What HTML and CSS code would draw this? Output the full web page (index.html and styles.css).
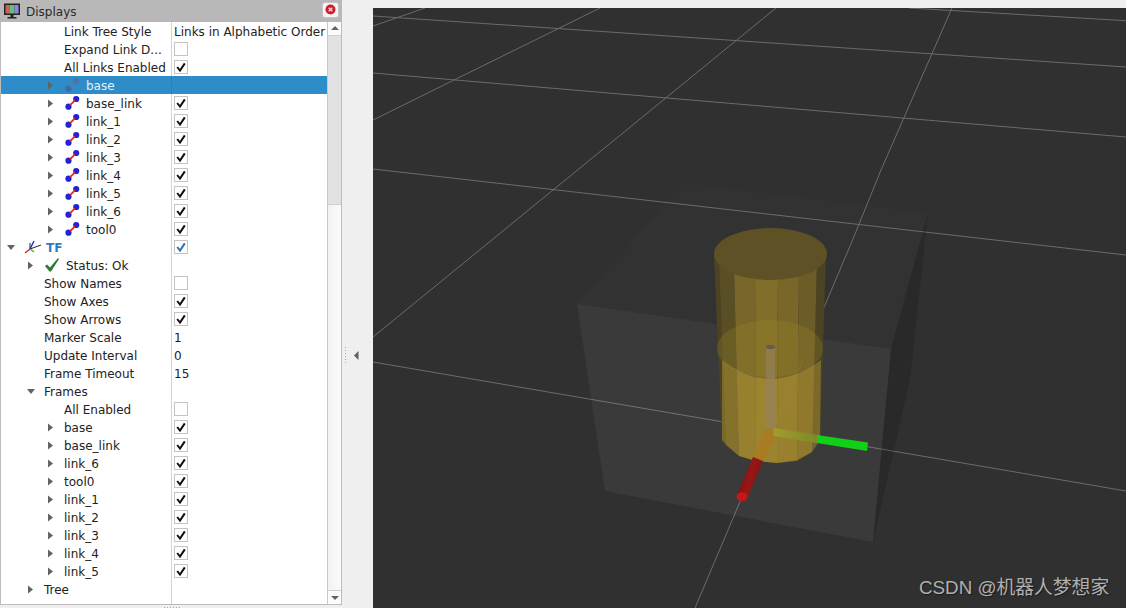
FILE: index.html
```html
<!DOCTYPE html>
<html lang="en">
<head>
<meta charset="utf-8">
<title>Displays</title>
<link rel="stylesheet" href="styles.css">
</head>
<body>
<svg class="defs" width="0" height="0" aria-hidden="true">
  <symbol id="right" viewBox="0 0 20 18"><path d="M4 5.500 L9 9.500 L4 13.500 Z" fill="#636363"/></symbol>
  <symbol id="down" viewBox="0 0 20 18"><path d="M3 7 L11 7 L7 12 Z" fill="#636363"/></symbol>
  <symbol id="link" viewBox="0 0 22 18"><circle cx="4.500" cy="12.700" r="3.100" fill="#2323d6"/><circle cx="12.200" cy="5" r="3.100" fill="#2323d6"/><path d="M6 11.200 L11 6.300" stroke="#ea2626" stroke-width="1.800"/></symbol>
  <symbol id="linkdim" viewBox="0 0 22 18"><circle cx="4.500" cy="12.700" r="3.100" fill="#3e69a8"/><circle cx="12.200" cy="5" r="3.100" fill="#4a73ab"/><path d="M6 11.200 L11 6.300" stroke="#5d7b9c" stroke-width="1.800"/></symbol>
  <symbol id="tick" viewBox="0 0 14 14"><path d="M3.200 7 L6 10.500 L10.800 3.400" fill="none" stroke="#111" stroke-width="2"/></symbol>
  <symbol id="tickblue" viewBox="0 0 14 14"><path d="M3.200 7 L6 10.500 L10.800 3.400" fill="none" stroke="#2a72b8" stroke-width="2"/></symbol>
</svg>
<div class="app">
  <section class="panel">
    <header class="titlebar">
      <svg class="monitor" width="18" height="18" viewBox="0 0 18 18">
        <rect x="1" y="1.500" width="16" height="11.500" fill="#222"/>
        <rect x="2.500" y="3" width="4.500" height="8.500" fill="#d0605c"/>
        <rect x="7" y="3" width="4.500" height="8.500" fill="#64c078"/>
        <rect x="11.500" y="3" width="4" height="8.500" fill="#8a88dc"/>
        <rect x="7.500" y="13" width="3" height="2" fill="#222"/>
        <rect x="4.500" y="15" width="9" height="1.500" fill="#222"/>
      </svg>
      <span class="title">Displays</span>
      <button class="close"><svg width="11" height="11" viewBox="0 0 11 11"><circle cx="5.500" cy="5.500" r="5" fill="#d5182a"/><path d="M3.700 3.700 L7.300 7.300 M7.300 3.700 L3.700 7.300" stroke="#f6d6d6" stroke-width="1.500"/></svg></button>
    </header>
    <div class="body">
      <div class="tree">
        <div class="row"><div class="name i44b">Link Tree Style</div><div class="val">Links in Alphabetic Order</div></div>
        <div class="row"><div class="name i44b">Expand Link D...</div><div class="val"><span class="check"></span></div></div>
        <div class="row"><div class="name i44b">All Links Enabled</div><div class="val"><span class="check"><svg><use href="#tick"/></svg></span></div></div>
        <div class="row selected"><div class="name i44"><svg class="arrow"><use href="#right"/></svg><svg class="icon"><use href="#linkdim"/></svg>base</div><div class="val"></div></div>
        <div class="row"><div class="name i44"><svg class="arrow"><use href="#right"/></svg><svg class="icon"><use href="#link"/></svg>base_link</div><div class="val"><span class="check"><svg><use href="#tick"/></svg></span></div></div>
        <div class="row"><div class="name i44"><svg class="arrow"><use href="#right"/></svg><svg class="icon"><use href="#link"/></svg>link_1</div><div class="val"><span class="check"><svg><use href="#tick"/></svg></span></div></div>
        <div class="row"><div class="name i44"><svg class="arrow"><use href="#right"/></svg><svg class="icon"><use href="#link"/></svg>link_2</div><div class="val"><span class="check"><svg><use href="#tick"/></svg></span></div></div>
        <div class="row"><div class="name i44"><svg class="arrow"><use href="#right"/></svg><svg class="icon"><use href="#link"/></svg>link_3</div><div class="val"><span class="check"><svg><use href="#tick"/></svg></span></div></div>
        <div class="row"><div class="name i44"><svg class="arrow"><use href="#right"/></svg><svg class="icon"><use href="#link"/></svg>link_4</div><div class="val"><span class="check"><svg><use href="#tick"/></svg></span></div></div>
        <div class="row"><div class="name i44"><svg class="arrow"><use href="#right"/></svg><svg class="icon"><use href="#link"/></svg>link_5</div><div class="val"><span class="check"><svg><use href="#tick"/></svg></span></div></div>
        <div class="row"><div class="name i44"><svg class="arrow"><use href="#right"/></svg><svg class="icon"><use href="#link"/></svg>link_6</div><div class="val"><span class="check"><svg><use href="#tick"/></svg></span></div></div>
        <div class="row"><div class="name i44"><svg class="arrow"><use href="#right"/></svg><svg class="icon"><use href="#link"/></svg>tool0</div><div class="val"><span class="check"><svg><use href="#tick"/></svg></span></div></div>
        <div class="row"><div class="name i4"><svg class="arrow"><use href="#down"/></svg><svg class="icon" viewBox="0 0 22 18"><path d="M6 11 L6 5 M6 11 L17 7" stroke="#222" stroke-width="1"/><path d="M6 11 L1 15" stroke="#e02020" stroke-width="1.400"/><path d="M6 11 L10 3" stroke="#2323d6" stroke-width="1.400"/><path d="M6 11 L10 14" stroke="#22c040" stroke-width="1.400"/></svg><span class="tf">TF</span></div><div class="val"><span class="check"><svg><use href="#tickblue"/></svg></span></div></div>
        <div class="row"><div class="name i24"><svg class="arrow"><use href="#right"/></svg><svg class="icon" viewBox="0 0 22 18"><polygon points="1,10 3,8.500 6,11.500 14,2 15,3 7,15.500 5.500,15.500" fill="#2a7a30"/></svg>Status: Ok</div><div class="val"></div></div>
        <div class="row"><div class="name i44">Show Names</div><div class="val"><span class="check"></span></div></div>
        <div class="row"><div class="name i44">Show Axes</div><div class="val"><span class="check"><svg><use href="#tick"/></svg></span></div></div>
        <div class="row"><div class="name i44">Show Arrows</div><div class="val"><span class="check"><svg><use href="#tick"/></svg></span></div></div>
        <div class="row"><div class="name i44">Marker Scale</div><div class="val">1</div></div>
        <div class="row"><div class="name i44">Update Interval</div><div class="val">0</div></div>
        <div class="row"><div class="name i44">Frame Timeout</div><div class="val">15</div></div>
        <div class="row"><div class="name i24"><svg class="arrow"><use href="#down"/></svg>Frames</div><div class="val"></div></div>
        <div class="row"><div class="name i44b">All Enabled</div><div class="val"><span class="check"></span></div></div>
        <div class="row"><div class="name i44"><svg class="arrow"><use href="#right"/></svg>base</div><div class="val"><span class="check"><svg><use href="#tick"/></svg></span></div></div>
        <div class="row"><div class="name i44"><svg class="arrow"><use href="#right"/></svg>base_link</div><div class="val"><span class="check"><svg><use href="#tick"/></svg></span></div></div>
        <div class="row"><div class="name i44"><svg class="arrow"><use href="#right"/></svg>link_6</div><div class="val"><span class="check"><svg><use href="#tick"/></svg></span></div></div>
        <div class="row"><div class="name i44"><svg class="arrow"><use href="#right"/></svg>tool0</div><div class="val"><span class="check"><svg><use href="#tick"/></svg></span></div></div>
        <div class="row"><div class="name i44"><svg class="arrow"><use href="#right"/></svg>link_1</div><div class="val"><span class="check"><svg><use href="#tick"/></svg></span></div></div>
        <div class="row"><div class="name i44"><svg class="arrow"><use href="#right"/></svg>link_2</div><div class="val"><span class="check"><svg><use href="#tick"/></svg></span></div></div>
        <div class="row"><div class="name i44"><svg class="arrow"><use href="#right"/></svg>link_3</div><div class="val"><span class="check"><svg><use href="#tick"/></svg></span></div></div>
        <div class="row"><div class="name i44"><svg class="arrow"><use href="#right"/></svg>link_4</div><div class="val"><span class="check"><svg><use href="#tick"/></svg></span></div></div>
        <div class="row"><div class="name i44"><svg class="arrow"><use href="#right"/></svg>link_5</div><div class="val"><span class="check"><svg><use href="#tick"/></svg></span></div></div>
        <div class="row"><div class="name i24"><svg class="arrow"><use href="#right"/></svg>Tree</div><div class="val"></div></div>
        <div class="row filler"><div class="name"></div><div class="val"></div></div>
      </div>
      <div class="scrollbar">
        <div class="sb-btn"><svg width="14" height="13" viewBox="0 0 14 13"><path d="M3 8 L11 8 L7 4 Z" fill="#636363"/></svg></div>
        <div class="sb-handle"></div>
        <div class="sb-track"></div>
        <div class="sb-btn down"><svg width="14" height="13" viewBox="0 0 14 13"><path d="M3 5 L11 5 L7 9 Z" fill="#636363"/></svg></div>
      </div>
    </div>
    <div class="grip"><i></i><i></i><i></i><i></i><i></i><i></i></div>
  </section>
  <div class="splitter">
    <div class="vgrip"><i></i><i></i><i></i><i></i><i></i><i></i></div>
    <svg width="5" height="9" viewBox="0 0 5 9"><path d="M4.500 0 L4.500 9 L0 4.500 Z" fill="#606060"/></svg>
  </div>
  <main class="view">
    <svg class="scene" width="753" height="600" viewBox="373 8 753 600">
      <defs>
        <linearGradient id="redcyl" x1="0" y1="0" x2="1" y2="0.4"><stop offset="0" stop-color="#681212"/><stop offset="0.6" stop-color="#981717"/><stop offset="1" stop-color="#801313"/></linearGradient>
        <linearGradient id="olive" x1="0" y1="0" x2="1" y2="0"><stop offset="0" stop-color="#a49c2c"/><stop offset="1" stop-color="#7a8a28"/></linearGradient>
      </defs>
      <g class="grid">
        <line x1="909" y1="8" x2="1126" y2="20.700"/>
        <line x1="373" y1="16" x2="1126" y2="67"/>
        <line x1="373" y1="73" x2="1126" y2="137"/>
        <line x1="373" y1="169" x2="1126" y2="255"/>
        <line x1="373" y1="362" x2="1126" y2="491"/>
        <line x1="373" y1="26" x2="425" y2="8"/>
        <line x1="373" y1="120" x2="600" y2="8"/>
        <line x1="373" y1="337" x2="776" y2="8"/>
        <polyline points="952,8 881,170 853,239 773,428 742,497 695,608"/>
      </g>
      <polygon points="683,183 928,213 891,349 577,304" fill="#fff" fill-opacity="0.012"/>
      <polygon points="577,304 891,349 873,542 605,491" fill="#fff" fill-opacity="0.05"/>
      <polygon points="928,213 910,380 873,542 891,349" fill="#000" fill-opacity="0.14"/>
      <g class="cyl">
        <polygon points="714,255 719,262 726,440 735,452 722,440" fill="#4b4321"/>
        <polygon points="826,255 817,262 812,445 820,440" fill="#4b4321"/>
        <polygon points="719,262 734,270 739,456 726,444" fill="#5a4f24"/>
        <polygon points="734,270 755,270 756,461 739,456" fill="#78662a"/>
        <polygon points="755,270 778,270 777,463 756,461" fill="#816e2b"/>
        <polygon points="778,270 799,270 797,461 777,463" fill="#796729"/>
        <polygon points="799,270 817,262 812,452 797,461" fill="#6c5c27"/>
        <path d="M722 360 Q770 398 821 360 L820 440 L812 452 L797 460 L777 463 L756 461 L739 456 L727 446 L722 440 Z" fill="#d0b038" fill-opacity="0.36"/>
        <ellipse cx="770" cy="348.500" rx="53" ry="28.500" fill="#a08a2c" fill-opacity="0.26"/>
        <ellipse cx="770.500" cy="254" rx="56.500" ry="26" fill="#5f5126"/>
      </g>
      <rect x="766" y="347" width="9" height="82" fill="#96805a" fill-opacity="0.7"/>
      <ellipse cx="770.500" cy="347" rx="4.500" ry="2" fill="#665a50"/>
      <line x1="773" y1="428" x2="803" y2="360" stroke="#a09050" stroke-opacity="0.25"/>
      <polygon points="767,428 778,432 763,461 753,457" fill="#a97c24"/>
      <polygon points="774,428 818,435 817,443 773,436" fill="url(#olive)"/>
      <polygon points="817,435 868,442.500 867,451 817,443" fill="#12d018"/>
      <polygon points="763,461 753,457 737,494.500 747,499" fill="url(#redcyl)"/>
      <ellipse cx="742" cy="496.700" rx="5.500" ry="4.500" fill="#c41818"/>
    </svg>
    <div class="watermark">CSDN @机器人梦想家</div>
  </main>
</div>
</body>
</html>
```
FILE: styles.css
```css
* { box-sizing: border-box; }
html, body { margin: 0; height: 100%; }
body { background: #efefef; font: 12px/18px "DejaVu Sans", sans-serif; color: #222; overflow: hidden; }
.defs { position: absolute; }
.app { display: flex; width: 1126px; height: 608px; overflow: hidden; }

.panel { width: 342px; height: 608px; display: flex; flex-direction: column; flex: none; }
.titlebar { height: 22px; flex: none; background: #b8b8b8; display: flex; align-items: center; padding: 0 3px 0 3px; }
.monitor { flex: none; }
.title { margin-left: 5px; padding-top: 1px; color: #2a2a2a; }
.close { margin-left: auto; width: 17px; height: 16px; padding: 0; border: 1px solid #c6c6c6; border-radius: 3px; background: #f4f4f4; display: flex; align-items: center; justify-content: center; margin-top: -3px; }
.close svg { display: block; }

.body { height: 583px; flex: none; display: flex; border: 1px solid #bcbcbc; border-top: 0; background: #fff; }
.tree { flex: 1; min-width: 0; display: flex; flex-direction: column; }
.row { height: 18px; flex: none; display: flex; }
.row.filler { flex: 1; }
.name { width: 171px; flex: none; border-right: 1px solid #d4d4d4; display: flex; align-items: center; white-space: nowrap; overflow: hidden; padding-top: 1px; }
.name svg { margin-top: -1px; }
.val { flex: 1; padding-left: 2px; padding-top: 1px; display: flex; align-items: center; white-space: nowrap; overflow: hidden; }
.i4 { padding-left: 3px; }
.i24 { padding-left: 23px; }
.i44 { padding-left: 43px; }
.i44b { padding-left: 63px; }
.arrow { width: 20px; height: 18px; flex: none; }
.icon { width: 22px; height: 18px; flex: none; }
.tf { color: #2b7cc6; font-weight: bold; }
.selected { background: #2e8cc9; color: #e6f0f8; }
.selected .name { border-right-color: #2a82bd; }
.check { width: 14px; height: 14px; border: 1px solid #c4c4c4; background: #fff; display: block; margin-top: -1px; }
.check svg { display: block; width: 14px; height: 14px; margin: -1px; }

.scrollbar { width: 14px; flex: none; display: flex; flex-direction: column; border-left: 1px solid #c8c8c8; background: linear-gradient(90deg, #f2f2f2, #fbfbfb); }
.sb-btn { height: 14px; flex: none; background: #fbfbfb; border-bottom: 1px solid #cfcfcf; }
.sb-btn.down { border-bottom: 0; border-top: 1px solid #cfcfcf; }
.sb-btn svg { display: block; }
.sb-handle { height: 169px; flex: none; background: #e2e2e2; border-bottom: 1px solid #cfcfcf; }
.sb-track { flex: 1; }

.grip { height: 3px; flex: none; display: flex; justify-content: center; gap: 2px; align-items: flex-end; margin-left: 2px; }
.grip i, .vgrip i { display: block; width: 1px; height: 1px; background: #a8a8a8; }

.splitter { width: 31px; flex: none; display: flex; align-items: center; height: 608px; padding: 102px 0 0 3px; gap: 8px; }
.vgrip { display: flex; flex-direction: column; gap: 2px; }
.splitter svg { display: block; }

.view { flex: 1; margin-top: 8px; background: #303030; position: relative; overflow: hidden; }
.scene { display: block; }
.grid line, .grid polyline { stroke: #6b6b6b; stroke-width: 1; fill: none; }
.watermark { position: absolute; left: 546px; top: 567px; font: 18.800px/26px "Liberation Sans", "Noto Sans CJK SC", sans-serif; color: #b0b0b0; text-shadow: 1px 1px 1px #1c1c1c; white-space: nowrap; }
```
